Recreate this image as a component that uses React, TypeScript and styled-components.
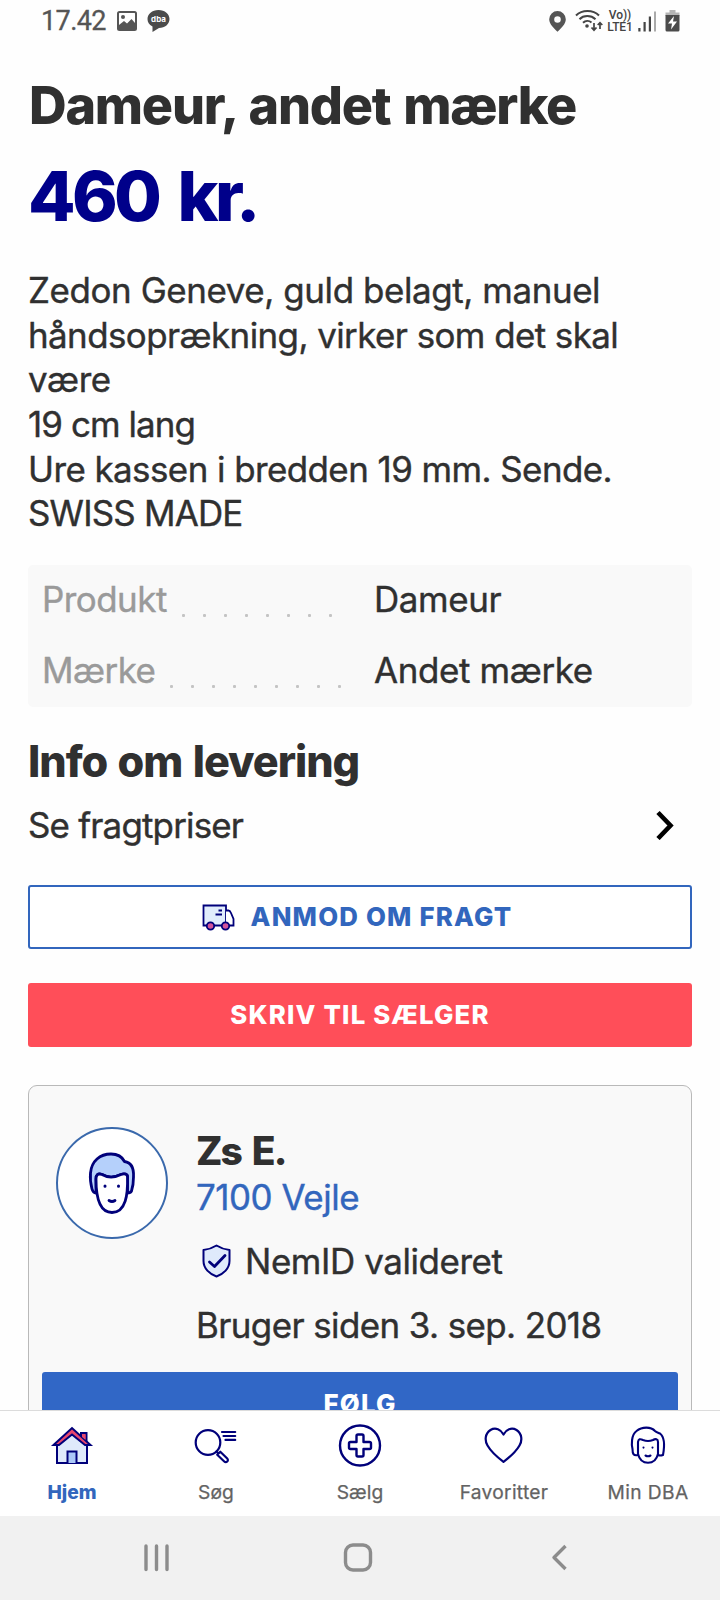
import React from 'react';
import styled, { createGlobalStyle } from 'styled-components';

const NAVY = '#00007a';
const BLUE = '#3266bd';
const INK = '#303030';
const GREY = '#555';

const GlobalStyle = createGlobalStyle`
  * { box-sizing: border-box; }
  body { margin: 0; background: #fff; }
`;

const Screen = styled.div`
  display: flex;
  flex-direction: column;
  width: 720px;
  height: 1600px;
  overflow: hidden;
  background: #fefefe;
  color: ${INK};
  font-family: Inter, 'Liberation Sans', sans-serif;
  font-weight: 400;
`;

const StatusBar = styled.header`
  display: flex;
  flex: none;
  align-items: center;
  justify-content: space-between;
  height: 42px;
  padding: 0 40px 0 41px;
  font-family: Roboto, sans-serif;
`;

const StatusGroup = styled.div`
  display: flex;
  align-items: center;
`;

const Clock = styled.span`
  width: 76px;
  font-size: 27px;
  line-height: 42px;
  letter-spacing: -0.6px;
  color: ${GREY};
  -webkit-text-stroke: 0.3px ${GREY};
`;

const StatusIcon = styled.svg<{ $gap: number }>`
  flex: none;
  margin-left: ${(p) => p.$gap}px;
`;

const Network = styled.div`
  display: flex;
  flex-direction: column;
  width: 28px;
  margin-left: 3px;
  font-size: 12px;
  font-weight: 500;
  line-height: 12px;
  text-align: center;
  white-space: nowrap;
  letter-spacing: -0.1px;
  color: #444;
`;

const Content = styled.main`
  display: flex;
  flex: none;
  flex-direction: column;
  height: 1368px;
  padding: 34px 28px 0;
  overflow: hidden;
`;

const Title = styled.h1`
  margin: 0;
  padding-left: 1px;
  font-size: 52.1px;
  font-weight: 800;
  line-height: 60px;
  letter-spacing: -1.25px;
  word-spacing: 2.5px;
  white-space: nowrap;
`;

const Price = styled.div`
  margin-top: 20px;
  font-size: 69.2px;
  font-weight: 800;
  line-height: 80px;
  letter-spacing: -3.7px;
  word-spacing: 8px;
  color: #00008a;
`;

const Description = styled.div`
  display: flex;
  flex-direction: column;
  margin-top: 32px;
`;

const Line = styled.span<{ $track: number }>`
  font-size: 34.9px;
  line-height: 44.67px;
  letter-spacing: ${(p) => p.$track}px;
  white-space: nowrap;
  -webkit-text-stroke: 0.4px ${INK};
`;

const Specs = styled.dl`
  margin: 29px 0 0;
  height: 142px;
  padding: 0 14px;
  border-radius: 5px;
  background: #f9f9f9;
`;

const SpecRow = styled.div`
  display: grid;
  grid-template-columns: 332px 1fr;
  height: 71px;
  font-size: 34.9px;
  line-height: 69px;
  letter-spacing: -0.35px;
`;

const SpecName = styled.dt<{ $track: number }>`
  display: flex;
  letter-spacing: ${(p) => p.$track}px;
  color: #9a9a9a;
  -webkit-text-stroke: 0.4px #9a9a9a;
`;

const SpecValue = styled.dd`
  margin: 0;
  -webkit-text-stroke: 0.4px ${INK};
`;

const Dots = styled.span<{ $gap: number }>`
  display: flex;
  gap: 18px;
  margin: 49px 0 0 ${(p) => p.$gap}px;
`;

const Dot = styled.i`
  width: 3px;
  height: 3px;
  border-radius: 1px;
  background: #c4c4c4;
`;

const SectionTitle = styled.h2`
  margin: 28px 0 0;
  font-size: 43.2px;
  font-weight: 800;
  line-height: 52px;
  letter-spacing: -1.05px;
  word-spacing: 2px;
`;

const LinkRow = styled.div`
  display: flex;
  align-items: center;
  justify-content: space-between;
  height: 46px;
  margin-top: 16px;
  padding-right: 18px;
`;

const Button = styled.button<{ $kind: 'outline' | 'red' | 'blue'; $top: number }>`
  display: flex;
  flex: none;
  align-items: center;
  justify-content: center;
  height: 64px;
  margin: ${(p) => p.$top}px 0 0;
  padding: ${(p) => (p.$kind === 'outline' ? '0 6px 0 0' : '0')};
  border: ${(p) => (p.$kind === 'outline' ? `2px solid ${BLUE}` : '0')};
  border-radius: 3px;
  background: ${(p) => ({ outline: '#fff', red: '#ff4e59', blue: '#3167c6' })[p.$kind]};
  color: ${(p) => (p.$kind === 'outline' ? BLUE : '#fff')};
  font-family: inherit;
  font-size: 25.8px;
  font-weight: 800;
  line-height: 60px;
  letter-spacing: 1.2px;
`;

const TruckIcon = styled.svg`
  margin-right: 16px;
`;

const SellerCard = styled.section`
  display: flex;
  flex: none;
  flex-direction: column;
  height: 420px;
  margin-top: 38px;
  padding: 41px 13px 0;
  border: 1px solid #b9b9b9;
  border-radius: 9px;
  background: #f9f9f9;
`;

const Seller = styled.div`
  display: flex;
  gap: 28px;
  height: 245px;
  padding-left: 14px;
`;

const Avatar = styled.div`
  display: flex;
  flex: none;
  align-items: center;
  justify-content: center;
  width: 112px;
  height: 112px;
  border: 2px solid #3a69ac;
  border-radius: 50%;
  background: #fff;
`;

const SellerInfo = styled.div`
  display: flex;
  flex-direction: column;
`;

const SellerName = styled.div`
  margin-top: 1px;
  font-size: 39px;
  font-weight: 800;
  line-height: 46px;
  letter-spacing: -2px;
  word-spacing: 4.5px;
`;

const SellerLine = styled.div<{ $top: number; $track: number; $link?: boolean }>`
  display: flex;
  align-items: center;
  margin-top: ${(p) => p.$top}px;
  font-size: 34.9px;
  line-height: 45px;
  letter-spacing: ${(p) => p.$track}px;
  white-space: nowrap;
  color: ${(p) => (p.$link ? BLUE : INK)};
  -webkit-text-stroke: 0.4px ${(p) => (p.$link ? BLUE : INK)};
`;

const ShieldIcon = styled.svg`
  margin: 0 14px 0 6px;
`;

const TabBar = styled.nav`
  display: grid;
  flex: none;
  grid-template-columns: repeat(5, 144px);
  height: 106px;
  border-top: 1px solid #dcdcdc;
  background: #fff;
`;

const Tab = styled.div<{ $active?: boolean; $track: number }>`
  display: flex;
  flex-direction: column;
  align-items: center;
  gap: 11px;
  padding-top: 12px;
  font-size: 19.2px;
  font-weight: ${(p) => (p.$active ? 800 : 400)};
  line-height: 28px;
  letter-spacing: ${(p) => p.$track}px;
  color: ${(p) => (p.$active ? BLUE : '#636363')};
  -webkit-text-stroke: ${(p) => (p.$active ? '0' : '0.25px #636363')};
`;

const SystemBar = styled.footer`
  display: flex;
  flex: none;
  height: 84px;
  padding: 25px 0 0 142px;
  background: #f1f1f1;
`;

const SystemIcon = styled.svg<{ $gap: number }>`
  flex: none;
  margin-right: ${(p) => p.$gap}px;
`;

const tabStroke = { fill: 'none', stroke: NAVY, strokeWidth: 2.2, strokeLinecap: 'round', strokeLinejoin: 'round' } as const;
const sysStroke = { fill: 'none', stroke: '#8c8c8c', strokeWidth: 3.4, strokeLinecap: 'round', strokeLinejoin: 'round' } as const;

const HomeIcon = () => (
  <svg width="44" height="44" viewBox="0 0 44 44" stroke={NAVY} strokeWidth="2">
    <path d="M7 21V40H37V21L22 8Z" fill="#dfeafb" />
    <path d="M17.500 40V28.500H26.500V40" fill="#abc8f8" />
    <path d="M31 15V10H36.500V21" fill="#e8476e" />
    <path d="M3.500 22L22 5 40.500 22H35L22 11.500 9 22Z" fill="#e8476e" />
    <path d="M32 11.500H35.500V17L32 14Z" fill="#e8476e" stroke="none" />
  </svg>
);

const SearchIcon = () => (
  <svg width="44" height="44" viewBox="0 0 44 44" {...tabStroke}>
    <circle cx="14" cy="19.500" r="12.300" />
    <path d="M22.500 28.500L24.500 30.500M23.200 31.800L26.300 28.700 33 35.200C35.500 37.700 32.200 40.500 30 38.200ZM28 9H41.200M29.500 13H41.200M31.500 16.900H41.200" />
  </svg>
);

const SellIcon = () => (
  <svg width="44" height="44" viewBox="0 0 44 44" {...tabStroke} strokeWidth="2.400">
    <circle cx="22" cy="22.500" r="20" />
    <path d="M18.500 13Q18.500 11.500 20 11.500H24Q25.500 11.500 25.500 13V19H31.500Q33 19 33 20.500V24.500Q33 26 31.500 26H25.500V32Q25.500 33.500 24 33.500H20Q18.500 33.500 18.500 32V26H12.500Q11 26 11 24.500V20.500Q11 19 12.500 19H18.500Z" />
  </svg>
);

const HeartIcon = () => (
  <svg width="44" height="44" viewBox="0 0 44 44" {...tabStroke}>
    <path d="M21.500 11.500C19 6.500 13.500 4 8.500 7 3 10.500 2.500 17.500 5.500 22.500 9 28.500 15 34 21.500 38.800 28 34 34 28.500 37.500 22.500 40.500 17.500 40 10.500 34.500 7 29.500 4 24 6.500 21.500 11.500Z" />
  </svg>
);

const ProfileIcon = () => (
  <svg width="44" height="44" viewBox="0 0 44 44" {...tabStroke} strokeWidth="2.100">
    <path d="M12 32C7.500 33 6.500 31 6.500 26 5.500 22 5 12 10.500 8 16 3.500 25 3.500 29 8 30.500 9.500 32 9.500 34 10.500 38.500 14 38.500 24 37 32Q34 33 32 32V19C32 16 29.500 15.500 27 17Q22 19 17 17C14 15.500 12.500 16 12 19Z" />
    <path d="M12 31C13.500 37 17 39.800 22 39.800S30.500 37 32 31M19.500 32.500Q22 34 24.500 32.500" />
    <path d="M17.500 24.500V24.600M26.500 24.500V24.600" />
  </svg>
);

const tabs = [
  { label: 'Hjem', icon: <HomeIcon />, track: 0, active: true },
  { label: 'Søg', icon: <SearchIcon />, track: 0.2 },
  { label: 'Sælg', icon: <SellIcon />, track: 0.1 },
  { label: 'Favoritter', icon: <HeartIcon />, track: 0.3 },
  { label: 'Min DBA', icon: <ProfileIcon />, track: 0.4 },
];

const description: [string, number][] = [
  ['Zedon Geneve, guld belagt, manuel', -0.39],
  ['håndsoprækning, virker som det skal', -0.56],
  ['være', -0.4],
  ['19 cm lang', -0.9],
  ['Ure kassen i bredden 19 mm. Sende.', -0.55],
  ['SWISS MADE', -0.8],
];

const specs = [
  { name: 'Produkt', value: 'Dameur', dots: 8, gap: 15, track: -0.5 },
  { name: 'Mærke', value: 'Andet mærke', dots: 9, gap: 15, track: -0.5 },
];

export default function App() {
  return (
    <Screen>
      <GlobalStyle />
      <StatusBar>
        <StatusGroup>
          <Clock>17.42</Clock>
          <StatusIcon $gap={0} width="20" height="20" viewBox="0 0 20 20">
            <rect x="1" y="1" width="18" height="18" rx="1.500" fill="none" stroke={GREY} strokeWidth="2" />
            <path d="M2 14L7 10 10 12.500 14.500 8 18 12V18H2Z" fill={GREY} />
            <circle cx="6" cy="6" r="2" fill={GREY} />
          </StatusIcon>
          <StatusIcon $gap={10} width="23" height="23" viewBox="0 0 23 23">
            <path d="M11.500 0C18 0 22.500 4 22.500 9S18 18 12 18L5.500 22V16.500C2 15 .5 12 .5 9 .5 4 5 0 11.500 0Z" fill="#4b4b4b" />
            <text x="11.500" y="11.800" textAnchor="middle" fontFamily="Inter" fontSize="8" fontWeight="700" fill="#fff">dba</text>
          </StatusIcon>
        </StatusGroup>
        <StatusGroup>
          <StatusIcon $gap={0} width="17" height="21" viewBox="0 0 17 21">
            <path fillRule="evenodd" d="M8.500 0A8.300 8.300 0 0 0 .2 8.300C.2 13 5 17.500 8.500 20.800 12 17.500 16.800 13 16.800 8.300A8.300 8.300 0 0 0 8.500 0ZM8.500 5.200A3.300 3.300 0 1 1 8.500 11.800 3.300 3.300 0 0 1 8.500 5.200Z" fill={GREY} />
          </StatusIcon>
          <StatusIcon $gap={9} width="28" height="23" viewBox="0 0 28 23" fill="none" stroke="#444" strokeWidth="2">
            <path d="M1 5.500C7-.5 18-.5 24 5.500M4.500 9.200C8.500 5 16 5 20.500 9.200M8 12.800C10.500 10.500 14 10.500 16.500 12.500" />
            <circle cx="12" cy="16" r="1.800" fill="#444" stroke="none" />
            <path d="M19 13V20M16.500 17.500L19 20.200 21.500 17.500M25 19V12.500M22.700 15L25 12.700 27.300 15" strokeWidth="1.700" />
          </StatusIcon>
          <Network>
            <span>Vo))</span>
            <span>LTE1</span>
          </Network>
          <StatusIcon $gap={4} width="19" height="21" viewBox="0 0 19 21">
            <path d="M.3 17H2.500V20.500H.3ZM5.500 11H7.700V20.500H5.500ZM10.800 5.500H13V20.500H10.800Z" fill="#444" />
            <path d="M16 .5H18V20.500H16Z" fill="#aaa" />
          </StatusIcon>
          <StatusIcon $gap={8} width="15" height="22" viewBox="0 0 15 22">
            <path d="M4.500 0H10.500V2.500H14.500V6H.5V2.500H4.500Z" fill="#b5b5b5" />
            <path d="M.5 5H14.500V20Q14.500 21.500 13 21.500H2Q.5 21.500 .5 20Z" fill="#4b4b4b" />
            <path d="M9 6L3 13.500H7L6 19.500 12 11.500H8Z" fill="#fff" />
          </StatusIcon>
        </StatusGroup>
      </StatusBar>

      <Content>
        <Title>Dameur, andet mærke</Title>
        <Price>460 kr.</Price>
        <Description>
          {description.map(([text, track]) => (
            <Line key={text} $track={track}>{text}</Line>
          ))}
        </Description>

        <Specs>
          {specs.map((s) => (
            <SpecRow key={s.name}>
              <SpecName $track={s.track}>
                {s.name}
                <Dots $gap={s.gap}>
                  {Array.from({ length: s.dots }, (_, i) => <Dot key={i} />)}
                </Dots>
              </SpecName>
              <SpecValue>{s.value}</SpecValue>
            </SpecRow>
          ))}
        </Specs>

        <SectionTitle>Info om levering</SectionTitle>
        <LinkRow>
          <Line $track={-0.8}>Se fragtpriser</Line>
          <svg width="18" height="30" viewBox="0 0 18 30">
            <path d="M2 2.500L14.500 15.500 2 28.500" fill="none" stroke="#000" strokeWidth="4.600" />
          </svg>
        </LinkRow>

        <Button $kind="outline" $top={37}>
          <TruckIcon width="33" height="28" viewBox="0 0 33 28" stroke={NAVY} strokeWidth="1.800">
            <path d="M1.500 2.500H24V22.500H1.500Z" fill="#e1edfc" />
            <path d="M24 7.500H26.500Q28 7.500 29 10L31.500 16V22.500H24" fill="#fff" />
            <path d="M16.500 7.500H20M13.500 11.500H20" />
            <circle cx="8.500" cy="23" r="3.700" fill="#d3549b" />
            <circle cx="23.500" cy="23" r="3.700" fill="#d3549b" />
          </TruckIcon>
          ANMOD OM FRAGT
        </Button>
        <Button $kind="red" $top={34}>SKRIV TIL SÆLGER</Button>

        <SellerCard>
          <Seller>
            <Avatar>
              <svg width="48" height="64" viewBox="0 0 48 64" stroke={NAVY} strokeWidth="2.800" strokeLinejoin="round" strokeLinecap="round">
                <path d="M8 42Q5 42 4 38C2.500 32 2 27 2.500 22 3.500 10 12 3 23 3 29 3 34 5.500 36.500 10.500 43 11.500 46 17.500 45.500 26Q45.500 34 43.500 40 42.500 42 39.500 42L39.500 26C39.500 23 36.500 22 33 23.500 26 27 20 27 14 23.500 10 22 8 24 8 28Z" fill="#b5d0fb" />
                <path d="M8 28C8 24 10 22 14 23.500 20 27 26 27 33 23.500 36.500 22 39.500 23 39.500 26C40 43 38 61.500 24 61.500S8 43 8 28Z" fill="#fff" />
                <path d="M21 49.500Q24 51.500 27 49.500" fill="none" />
                <path d="M17 35V35.200M30.500 35V35.200" fill="none" strokeWidth="3" />
              </svg>
            </Avatar>
            <SellerInfo>
              <SellerName>Zs E.</SellerName>
              <SellerLine $top={1} $track={-0.45} $link>7100 Vejle</SellerLine>
              <SellerLine $top={19} $track={-0.4}>
                <ShieldIcon width="29" height="34" viewBox="0 0 29 34" stroke={NAVY} strokeWidth="2" strokeLinejoin="round" strokeLinecap="round">
                  <path d="M14.500 1.500C10.500 4 6.500 5.500 1.500 6V17C1.500 24.500 7.500 30 14.500 32.500 21.500 30 27.500 24.500 27.500 17V6C22.500 5.500 18.500 4 14.500 1.500Z" fill="#dfeafb" />
                  <path d="M7.500 18L12.500 22.500 23 11.500" fill="none" strokeWidth="2.800" />
                </ShieldIcon>
                NemID valideret
              </SellerLine>
              <SellerLine $top={19} $track={-0.58}>Bruger siden 3. sep. 2018</SellerLine>
            </SellerInfo>
          </Seller>
          <Button $kind="blue" $top={0}>FØLG</Button>
        </SellerCard>
      </Content>

      <TabBar>
        {tabs.map((t) => (
          <Tab key={t.label} $active={t.active} $track={t.track}>
            {t.icon}
            {t.label}
          </Tab>
        ))}
      </TabBar>

      <SystemBar>
        <SystemIcon $gap={170} width="30" height="32" viewBox="0 0 30 32" {...sysStroke}>
          <path d="M4 5V28.500M14.500 5V28.500M25 5V28.500" />
        </SystemIcon>
        <SystemIcon $gap={175} width="32" height="32" viewBox="0 0 32 32" {...sysStroke}>
          <rect x="3.500" y="4" width="25" height="25" rx="7.500" />
        </SystemIcon>
        <SystemIcon $gap={0} width="20" height="32" viewBox="0 0 20 32" {...sysStroke}>
          <path d="M16.500 5L5 16.500 16.500 28" strokeLinecap="butt" />
        </SystemIcon>
      </SystemBar>
    </Screen>
  );
}
